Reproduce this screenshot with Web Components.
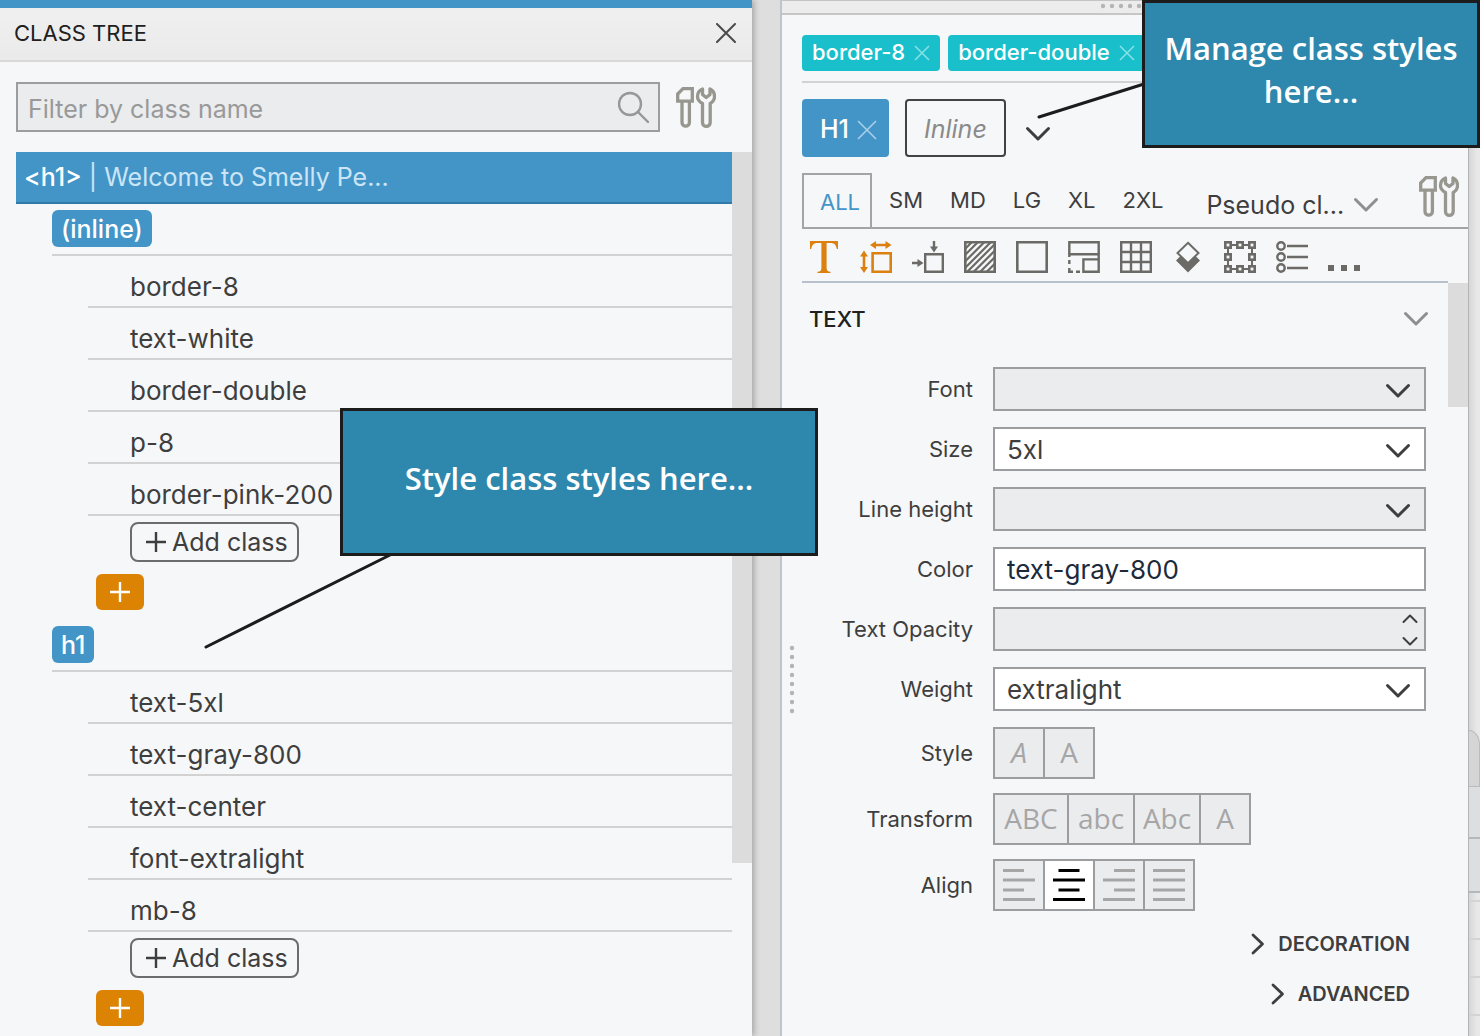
<!DOCTYPE html>
<html lang="en">
<head>
<meta charset="utf-8">
<meta name="viewport" content="width=device-width, initial-scale=1">
<title>Class Tree</title>
<style>
html, body { margin: 0; height: 100%; overflow: hidden; }
body {
  font-family: Inter, "Liberation Sans", sans-serif;
  font-size: 25px;
  color: #3e3e3e;
  --blue: #4395c7;
  --panel: #f6f7f9;
  --field: #ebecee;
  --line: #9c9da0;
  --rule: #d2d2d3;
  --icon: #6b6a66;
}
</style>
</head>
<body>
<app-shell></app-shell>
<script>
const define = (name, html, setup) => {
  const template = document.createElement('template');
  template.innerHTML = '<style>*{box-sizing:border-box}button,input,select{font:inherit;color:inherit;margin:0;border-radius:0}:host{display:block;box-sizing:border-box}</style>' + html;
  customElements.define(name, class extends HTMLElement {
    connectedCallback() {
      if (this.shadowRoot) return;
      this.attachShadow({ mode: 'open' }).append(template.content.cloneNode(true));
      if (setup) setup(this, this.shadowRoot);
    }
  });
};

const dots = (x) => [3, 12, 21, 30, 39, 48, 57, 66].map(p => `<circle cx="${x ? p : 3}" cy="${x ? 3 : p}" r="2.200"/>`).join('');
const F = 'fill="none" stroke="currentColor"';
const ICONS = {
  close: [20, 20, `<path ${F} stroke-width="2" stroke-linecap="round" d="M1 1L19 19M19 1L1 19"/>`],
  x: [16, 16, `<path ${F} stroke-width="1.5" d="M1 1L15 15M15 1L1 15"/>`],
  bigx: [20, 20, `<path ${F} stroke-width="1.6" d="M1 1L19 19M19 1L1 19"/>`],
  plus: [20, 20, `<path ${F} stroke-width="2.4" d="M10 0V20M0 10H20"/>`],
  down: [26, 16, `<path ${F} stroke-width="3" stroke-linecap="round" stroke-linejoin="round" d="M2.5 2.5L13 13L23.5 2.5"/>`],
  right: [14, 22, `<path ${F} stroke-width="2.8" stroke-linecap="round" stroke-linejoin="round" d="M2 2L11.500 11L2 20"/>`],
  spin: [16, 32, `<path ${F} stroke-width="2" stroke-linecap="round" stroke-linejoin="round" d="M1.500 8L8 1.500L14.500 8M1.500 24L8 30.500L14.500 24"/>`],
  search: [34, 34, `<g ${F} stroke-width="2.4" stroke-linecap="round"><circle cx="12" cy="13" r="11"/><path d="M20 21L30 31"/></g>`],
  tools: [40, 42, `<g ${F} stroke-width="3.3"><path d="M1.700 14.200V7L7 1.700H16.300V14.200Z"/><path d="M6 15V35.500A3.700 3.700 0 0 0 13.400 35.500V15"/><path stroke-linejoin="round" d="M26.500 2C22.500 3.500 21.500 6.500 21.500 9.500C21.500 13 23.500 15 26.500 16.500V35.500A3.800 3.800 0 0 0 34.200 35.500V16.500C37 15 38.500 13 38.500 9.500C38.500 6.500 37.500 3.500 34 2V7.500L30.200 10.500L26.500 7.500Z"/></g>`],
  dotsx: [70, 6, dots(true)],
  dotsy: [6, 70, dots(false)],
  type: [32, 32, '<path fill="currentColor" d="M2 0H30V8H28.800C28 4 26.500 2 22.500 2H18.600V27C18.600 29.500 19.500 30.500 22.500 30.700V32H9.500V30.700C12.500 30.500 13.400 29.500 13.400 27V2H9.500C5.500 2 4 4 3.200 8H2Z"/>'],
  size: [32, 32, `<path ${F} stroke-width="2.600" d="M12.600 12.300H30.700V30.700H12.600ZM13 4H28M4 13V28"/><path fill="currentColor" d="M10 4L16 0V8ZM31.500 4L25.500 0V8ZM4 9.500L0 15.500H8ZM4 32L0 26H8Z"/>`],
  space: [32, 32, `<path ${F} stroke-width="2.400" d="M13.200 13.200H30.800V30.800H13.200ZM0 22H7M22 0V7"/><path fill="currentColor" d="M11.500 22L5.500 18V26ZM22 11.500L18 5.500H26Z"/>`],
  hatch: [32, 32, `<path ${F} stroke-width="2.600" d="M1.300 1.300H30.700V30.700H1.300Z"/><path ${F} stroke-width="2.200" d="M1 8L8 1M1 14L14 1M1 20.500L20.500 1M1 27L27 1M3 31L31 3M9.500 31L31 9.500M16 31L31 16M22.500 31L31 22.500"/>`],
  box: [32, 32, `<path ${F} stroke-width="2.600" d="M1.300 1.300H30.700V30.700H1.300Z"/>`],
  layout: [32, 32, `<path ${F} stroke-width="2.400" d="M1.300 16V1.300H30.700V30.700H15.400V18.400H30.700M1.300 13.200H30.700M1.300 19V23M1.300 27V32M5 30.700H0M8 30.700H12"/>`],
  grid: [32, 32, `<path ${F} stroke-width="2.400" d="M1.200 1.200H30.800V30.800H1.200ZM11 1V31M21 1V31M1 11H31M1 21H31"/>`],
  layers: [32, 32, `<path fill="currentColor" d="M4 19.500L8 15.500H24L28 19.500L16 31.500Z"/><path fill="#f6f7f9" stroke="currentColor" stroke-width="2" d="M16 1.800L26.500 12L16 22.200L5.500 12Z"/>`],
  nodes: [32, 32, `<path ${F} stroke-width="2" d="M4 4H28V28H4Z"/><g fill="#f6f7f9" stroke="currentColor" stroke-width="2.600">${[[0, 0], [12, 0], [24, 0], [0, 12], [24, 12], [0, 24], [12, 24], [24, 24]].map(([a, b]) => `<rect x="${a + 1.3}" y="${b + 1.3}" width="5.400" height="5.400"/>`).join('')}</g>`],
  list: [32, 32, `<g ${F} stroke-width="2.400"><circle cx="5" cy="5" r="3.700"/><circle cx="5" cy="16" r="3.700"/><circle cx="5" cy="27" r="3.700"/><path d="M11 5H32M11 16H32M11 27H32"/></g>`],
  more: [32, 32, '<path fill="currentColor" d="M0 24H6V30H0ZM13 24H19V30H13ZM26 24H32V30H26Z"/>'],
  left: [32, 34, `<path ${F} stroke-width="3" d="M0 2.500H21M0 12H32M0 22H21M0 31.500H32"/>`],
  center: [32, 34, `<path ${F} stroke-width="3" d="M5.500 2.500H26.500M0 12H32M5.500 22H26.500M0 31.500H32"/>`],
  rightalign: [32, 34, `<path ${F} stroke-width="3" d="M11 2.500H32M0 12H32M11 22H32M0 31.500H32"/>`],
  justify: [32, 34, `<path ${F} stroke-width="3" d="M0 2.500H32M0 12H32M0 22H32M0 31.500H32"/>`]
};

define('ui-icon', '<style>:host{display:block;flex:none}svg{display:block}</style>', (host, root) => {
  const [w, h, body] = ICONS[host.getAttribute('name')];
  const box = document.createElement('div');
  box.innerHTML = `<svg width="${w}" height="${h}" viewBox="0 0 ${w} ${h}" fill="currentColor" aria-hidden="true">${body}</svg>`;
  root.append(box);
});

define('panel-header', `<style>
:host{display:flex;align-items:center;justify-content:space-between;height:54px;padding:0 16px 2px 14px;background:linear-gradient(#f0f0f0,#eaeaea);border-bottom:2px solid #d8d8d9}
h2{margin:0;font-size:22px;font-weight:400;color:#202020}
button{border:0;background:none;padding:0;color:#4a4a4a}
</style><h2><slot></slot></h2><button aria-label="Close"><ui-icon name="close"></ui-icon></button>`);

define('class-filter', `<style>
:host{display:flex;align-items:center;gap:16px;padding:20px 36px 20px 16px}
label{flex:1;display:flex;align-items:center;height:50px;border:2px solid var(--line);background:var(--field);padding:0 6px 0 10px;color:#979797}
input{flex:1;min-width:0;height:46px;border:0;background:none;outline:0;padding:3px 0 0}
input::placeholder{color:#999;opacity:1}
button{border:0;padding:2px 0 0;background:none;color:#97968f}
label ui-icon{margin-top:2px}
</style><label><input type="search" aria-label="Filter by class name" placeholder="Filter by class name"><ui-icon name="search"></ui-icon></label>
<button aria-label="Tools"><ui-icon name="tools"></ui-icon></button>`);

define('tree-item', `<style>
:host{height:52px;margin-left:72px;padding:12px 0 0 42px;font-size:26px;line-height:38px;border-bottom:2px solid var(--rule)}
</style><slot></slot>`);

define('tree-group', `<style>
.head{height:52px;margin-left:36px;padding-top:6px;border-bottom:2px solid var(--rule)}
.chip{display:inline-block;height:37px;line-height:38px;padding:0 9px;border-radius:6px;background:var(--blue);color:#fff;font-weight:500}
.foot{height:104px;padding:6px 0 10px 80px;display:flex;flex-direction:column;align-items:flex-start;gap:12px}
.add{display:flex;align-items:center;gap:6px;height:40px;margin-left:34px;padding:0 9px 0 14px;border:2px solid #6c6c6c;border-radius:8px;background:none}
.new{display:flex;align-items:center;justify-content:center;width:48px;height:36px;padding:0;border:0;border-radius:6px;background:#dd8304;color:#fff}
</style><div class="head"><span class="chip"></span></div><slot></slot>
<div class="foot"><button class="add"><ui-icon name="plus"></ui-icon>Add class</button><button class="new" aria-label="Add"><ui-icon name="plus"></ui-icon></button></div>`,
  (host, root) => { root.querySelector('.chip').textContent = host.getAttribute('name'); });

define('class-tree', `<style>
:host{display:flex;flex-direction:column;background:var(--panel);border-top:8px solid var(--blue);box-shadow:2px 0 6px #0004;min-width:0;z-index:1}
.body{flex:1;min-height:0;display:flex;padding-left:16px}
.tree{flex:1;min-width:0;overflow:hidden}
.bar{width:20px;height:711px;background:#dcdcdc}
.sel{height:52px;line-height:50px;padding-left:8px;background:var(--blue);border-bottom:2px solid #3079a8;color:#cbe5f7;white-space:nowrap;overflow:hidden}
b{font-weight:500;color:#fff}
</style><panel-header>CLASS TREE</panel-header><class-filter></class-filter>
<div class="body"><div class="tree"><div class="sel"><b>&lt;h1&gt;</b> | Welcome to Smelly Pe...</div>
<tree-group name="(inline)"><tree-item>border-8</tree-item><tree-item>text-white</tree-item><tree-item>border-double</tree-item><tree-item>p-8</tree-item><tree-item>border-pink-200</tree-item></tree-group>
<tree-group name="h1"><tree-item>text-5xl</tree-item><tree-item>text-gray-800</tree-item><tree-item>text-center</tree-item><tree-item>font-extralight</tree-item><tree-item>mb-8</tree-item></tree-group>
</div><div class="bar"></div></div>`);

define('class-chip', `<style>
:host{display:flex;align-items:center;gap:9px;height:36px;padding:0 10px 2px;border-radius:4px;background:#19bfca;color:#fff;font-size:22px;font-weight:500;white-space:nowrap;flex:none}
button{border:0;background:none;padding:2px 0 0;color:#8be0e6}
</style><slot></slot><button aria-label="Remove"><ui-icon name="x"></ui-icon></button>`);

define('selector-bar', `<style>
.chips{display:flex;gap:8px;height:48px;border-bottom:2px solid var(--rule);overflow:hidden}
.row{display:flex;align-items:center;height:58px;margin-top:16px}
.row>button{height:58px;border:0;border-radius:4px;background:none;padding:0}
.row .tag{display:flex;align-items:center;gap:8px;padding:2px 12px 0 18px;background:var(--blue);color:#fff;font-weight:500}
.tag ui-icon{color:#a9d0ea;margin-top:2px}
.row .inl{margin:0 19px 0 16px;padding:2px 17px 0;border:2px solid #424242;font-style:italic;color:#8a8a8a}
.row .more{padding-top:12px}
</style><div class="chips"><class-chip>border-8</class-chip><class-chip>border-double</class-chip></div>
<div class="row"><button class="tag">H1<ui-icon name="bigx"></ui-icon></button><button class="inl">Inline</button><button class="more" aria-label="More selectors"><ui-icon name="down"></ui-icon></button></div>`);

define('breakpoint-tabs', `<style>
:host{display:flex;align-items:center;height:56px;margin-top:16px;border-bottom:2px solid #a4a4a5;font-size:22px}
button{border:0;background:none;padding:0}
.tabs{display:flex;align-items:center;gap:27px;height:54px}
.tabs .all{height:54px;padding:2px 10px 0 16px;border:2px solid #a4a4a5;border-bottom:0;color:var(--blue);margin-right:-10px}
.pseudo{display:grid;flex:1;align-items:center;max-width:173px;margin-left:43px;padding-top:10px}
.pseudo>*{grid-area:1/1}
select{appearance:none;border:0;background:none;padding:0;font-size:25px;width:100%}
.pseudo ui-icon{justify-self:end;color:#8f8f8f;pointer-events:none}
.tools{margin:0 9px 6px auto;color:#97968f}
</style><div class="tabs"><button class="all">ALL</button><button>SM</button><button>MD</button><button>LG</button><button>XL</button><button>2XL</button></div>
<div class="pseudo"><select aria-label="Pseudo class"><option>Pseudo cl...</option></select><ui-icon name="down"></ui-icon></div>
<button class="tools" aria-label="Tools"><ui-icon name="tools"></ui-icon></button>`);

define('category-bar', `<style>
:host{display:flex;gap:20px;height:54px;padding:12px 0 0 6px;margin-right:20px;border-bottom:2px solid #b7c1cb;color:var(--icon)}
button{border:0;background:none;padding:0;height:32px;color:inherit}
.on{color:#dc8010}
</style>`, (host, root) => {
  [['type', 'Text'], ['size', 'Size'], ['space', 'Spacing'], ['hatch', 'Background'], ['box', 'Border'], ['layout', 'Layout'], ['grid', 'Grid'], ['layers', 'Layers'], ['nodes', 'Transform'], ['list', 'List'], ['more', 'More']].forEach(([n, label], i) => {
    const b = document.createElement('button');
    b.setAttribute('aria-label', label);
    if (i < 2) b.className = 'on';
    b.innerHTML = `<ui-icon name="${n}"></ui-icon>`;
    root.append(b);
  });
});

define('field-row', `<style>
:host{display:grid;grid-template-columns:171px 1fr;column-gap:20px;align-items:center;height:44px;margin-bottom:16px}
label{font-size:22px;text-align:right}
.ctl{display:grid;align-items:center;color:#3e3e3e}
.ctl>*{grid-area:1/1;min-width:0}
input,select{appearance:none;width:100%;height:44px;border:2px solid var(--line);background:#fff;padding:1px 12px 0;outline:0;font-size:26px}
.empty{background:var(--field)}
input[type=text]{color:#1c2a3c}
input[type=number]{appearance:textfield}
input::-webkit-inner-spin-button{appearance:none}
ui-icon{justify-self:end;margin:4px 15px 0 0;pointer-events:none}
ui-icon[name=spin]{margin:2px 8px 0 0}
</style><label for="c"></label><div class="ctl"></div>`, (host, root) => {
  const value = host.getAttribute('value') || '', kind = host.getAttribute('kind') || 'select';
  root.querySelector('label').textContent = host.getAttribute('label');
  const cls = value ? '' : 'class="empty"';
  root.querySelector('.ctl').innerHTML = kind === 'select'
    ? `<select id="c" ${cls}><option>${value}</option></select><ui-icon name="down"></ui-icon>`
    : kind === 'number' ? `<input id="c" type="number" ${cls}><ui-icon name="spin"></ui-icon>`
    : `<input id="c" type="text" value="${value}">`;
});

define('choice-row', `<style>
:host{display:grid;grid-template-columns:171px 1fr;column-gap:20px;align-items:center;height:52px;margin-bottom:14px}
#l{font-size:22px;text-align:right}
.set{justify-self:start;display:flex;border:2px solid var(--line);background:var(--field);height:52px}
button{display:flex;align-items:center;justify-content:center;width:50px;height:48px;padding:0 0 2px;border:0;border-right:2px solid var(--line);background:none;color:#a6a6a6;font:400 28px "Open Sans",sans-serif}
.wide{width:66px}
.wider{width:74px}
.it{font-style:italic}
button:last-child{border-right:0;width:48px}
.on{background:#fff;color:#000}
button ui-icon{margin-top:2px}
</style><span id="l"></span><div class="set" role="group" aria-labelledby="l"></div>`, (host, root) => {
  root.querySelector('#l').textContent = host.getAttribute('label');
  const set = root.querySelector('.set');
  host.getAttribute('choices').split(' ').forEach(choice => {
    const [text, cls] = choice.split(':');
    const b = document.createElement('button');
    if (cls) b.className = cls;
    if (ICONS[text]) {
      b.setAttribute('aria-label', text);
      b.innerHTML = `<ui-icon name="${text}"></ui-icon>`;
    } else b.textContent = text;
    set.append(b);
  });
});

define('text-section', `<style>
:host{flex:1;min-height:0;display:flex}
.main{flex:1;min-width:0;padding-right:22px}
.bar{width:20px;height:124px;background:#dcdcdc}
.head{display:flex;align-items:center;justify-content:space-between;height:72px;padding:0 0 0 7px;margin-right:-3px;margin-bottom:12px}
h3{margin:0;font-size:22px;font-weight:500;color:#202020}
.head ui-icon{color:#8f8f8f}
button{display:flex;align-items:center;border:0;background:none;padding:0}
.sub{display:flex;flex-direction:column;align-items:flex-end;padding-right:16px;margin-top:-6px}
.sub button{gap:13px;height:50px;font-size:20px;font-weight:600}
</style><div class="main"><div class="head"><h3>TEXT</h3><button aria-label="Collapse"><ui-icon name="down"></ui-icon></button></div>
<field-row label="Font"></field-row><field-row label="Size" value="5xl"></field-row><field-row label="Line height"></field-row>
<field-row label="Color" kind="text" value="text-gray-800"></field-row><field-row label="Text Opacity" kind="number"></field-row><field-row label="Weight" value="extralight"></field-row>
<choice-row label="Style" choices="A:it A"></choice-row>
<choice-row label="Transform" choices="ABC:wider abc:wide Abc:wide A"></choice-row>
<choice-row label="Align" choices="left center:on rightalign justify"></choice-row>
<div class="sub"><button><ui-icon name="right"></ui-icon>DECORATION</button><button><ui-icon name="right"></ui-icon>ADVANCED</button></div>
</div><div class="bar"></div>`);

define('style-panel', `<style>
:host{display:flex;flex-direction:column;min-width:0;background:var(--panel);border-left:2px solid #bfc3cc;border-right:1px solid #b4b4b4}
.grip{display:flex;align-items:center;justify-content:center;height:15px;padding:0 0 2px 20px;border-top:1px solid #c4c4c4;border-bottom:2px solid #c6c6c7;background:#ececed;color:#b4b4b6}
.wrap{flex:1;min-height:0;display:flex}
.side{width:20px;padding:630px 0 0 7px;color:#b4b4b6}
.col{flex:1;min-width:0;display:flex;flex-direction:column;padding-top:20px}
</style><div class="grip"><ui-icon name="dotsx"></ui-icon></div>
<div class="wrap"><div class="side"><ui-icon name="dotsy"></ui-icon></div>
<div class="col"><selector-bar></selector-bar><breakpoint-tabs></breakpoint-tabs><category-bar></category-bar><text-section></text-section></div></div>`);

define('page-preview', `<style>
:host{display:flex;flex-direction:column;background:linear-gradient(90deg,#d6d6d6,#e8e8e8 8px);overflow:hidden;height:100%}
div{flex:none}
.gap{height:730px}
.tab{height:57px;border:1px solid #bbb;border-left:0;border-top-right-radius:12px 16px;background:#d5d5d5}
.r{height:52px;background:#dcdee0;border-bottom:2px solid #b4b8bb}
.r+.r{height:54px}
.s{height:9px;border-bottom:2px solid #d4d4d4}
.s+.s{height:38px}
</style><div class="gap"></div><div class="tab"></div><div class="r"></div><div class="r"></div><div class="s"></div><div class="s"></div><div class="s"></div><div class="s"></div>`);

define('note-callout', `<style>
:host{position:absolute;height:148px;border:3px solid #1c1c1c;background:#2e88ad;color:#fff;text-align:center;font:600 31px/43px "Open Sans",sans-serif;z-index:3}
</style><slot></slot>`);

define('app-shell', `<style>
:host{position:relative;display:grid;grid-template-columns:752fr 28px 689fr 11px;grid-template-rows:100%;min-height:1036px;height:100vh;background:#dedede;overflow:hidden}
.lines{position:absolute;left:0;top:0;z-index:2;pointer-events:none}
.a{left:340px;top:408px;width:478px;padding-top:46px}
.b{left:1142px;top:0;width:338px;padding:24px 10px 0}
</style><class-tree></class-tree><div></div><style-panel></style-panel><page-preview></page-preview>
<svg class="lines" width="1480" height="1036" fill="none" stroke="#1c1c1c" stroke-width="3" stroke-linecap="round"><path d="M392 554L206 647M1144 84L1039 117"/></svg>
<note-callout class="a">Style class styles here...</note-callout><note-callout class="b">Manage class styles here...</note-callout>`);
</script>
</body>
</html>
